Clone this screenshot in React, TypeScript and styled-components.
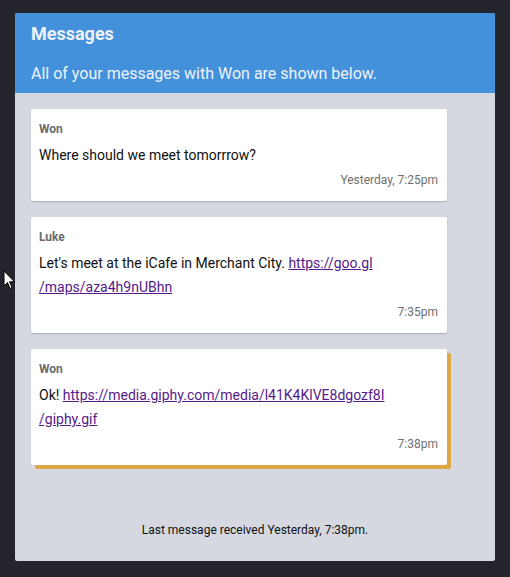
import React from "react";
import styled, { createGlobalStyle } from "styled-components";

const Global = createGlobalStyle`
  html, body { margin: 0; padding: 0; background: #24242d; }
  body { font-family: Roboto, "Noto Sans", Arial, sans-serif; }
`;

const Page = styled.div`
  position: relative;
  width: 510px;
  height: 577px;
  padding: 13px 15px 0;
  box-sizing: border-box;
`;

const Panel = styled.section`
  width: 480px;
  height: 548px;
  background: #d5d8e0;
  border-radius: 2px;
  overflow: hidden;
  display: flex;
  flex-direction: column;
`;

const Header = styled.header`
  background: #4390db;
  color: #eef3fb;
  padding: 1px 16px 0;
`;

const Title = styled.h1`
  margin: 0;
  font-size: 18px;
  font-weight: 700;
  line-height: 40px;
`;

const Subtitle = styled.p`
  margin: 0;
  font-size: 16px;
  line-height: 39px;
`;

const List = styled.div`
  display: flex;
  flex-direction: column;
  gap: 16px;
  padding: 16px 48px 0 16px;
`;

const Card = styled.article<{ $highlight?: boolean }>`
  background: #fff;
  border-radius: 2px;
  padding: 8px 9px 9px 8px;
  box-shadow: ${(p) =>
    p.$highlight
      ? "4px 4px 0 #dba843"
      : "0 1px 2px rgba(0,0,0,0.12), 0 1px 1px rgba(0,0,0,0.08)"};
`;

const Sender = styled.div`
  font-size: 12px;
  font-weight: 700;
  color: #6b6b6b;
  line-height: 24px;
`;

const Body = styled.div`
  font-size: 14px;
  color: #111;
  line-height: 24px;
  margin-top: 2px;
`;

const Link = styled.a`
  color: #551a8b;
  text-decoration: underline;
  word-break: break-all;
`;

const Time = styled.div`
  font-size: 12px;
  color: #6f6f6f;
  text-align: right;
  line-height: 24px;
  margin-top: 1px;
`;

const Footer = styled.div`
  margin-top: auto;
  text-align: center;
  font-size: 12px;
  color: #111;
  line-height: 24px;
  padding-bottom: 19px;
`;

const Cursor = styled.svg`
  position: absolute;
  left: 3px;
  top: 270px;
`;

const messages = [
  { from: "Won", body: <>Where should we meet tomorrrow?</>, time: "Yesterday, 7:25pm" },
  {
    from: "Luke",
    body: (
      <>
        Let's meet at the iCafe in Merchant City.{" "}
        <Link href="#">https://goo.gl</Link>
        <br />
        <Link href="#">/maps/aza4h9nUBhn</Link>
      </>
    ),
    time: "7:35pm",
  },
  {
    from: "Won",
    body: (
      <>
        Ok! <Link href="#">https://media.giphy.com/media/l41K4KlVE8dgozf8I</Link>
        <br />
        <Link href="#">/giphy.gif</Link>
      </>
    ),
    time: "7:38pm",
    highlight: true,
  },
];

export default function App() {
  return (
    <Page>
      <Global />
      <Panel>
        <Header>
          <Title>Messages</Title>
          <Subtitle>All of your messages with Won are shown below.</Subtitle>
        </Header>
        <List>
          {messages.map((m, i) => (
            <Card key={i} $highlight={m.highlight}>
              <Sender>{m.from}</Sender>
              <Body>{m.body}</Body>
              <Time>{m.time}</Time>
            </Card>
          ))}
        </List>
        <Footer>Last message received Yesterday, 7:38pm.</Footer>
      </Panel>
      <Cursor width="13" height="20" viewBox="0 0 13 20">
        <path d="M1 1 L1 16 L4.5 12.5 L7 18.5 L9 17.6 L6.6 11.8 L11.5 11.8 Z" fill="#fff" stroke="#000" strokeWidth="1" />
      </Cursor>
    </Page>
  );
}
